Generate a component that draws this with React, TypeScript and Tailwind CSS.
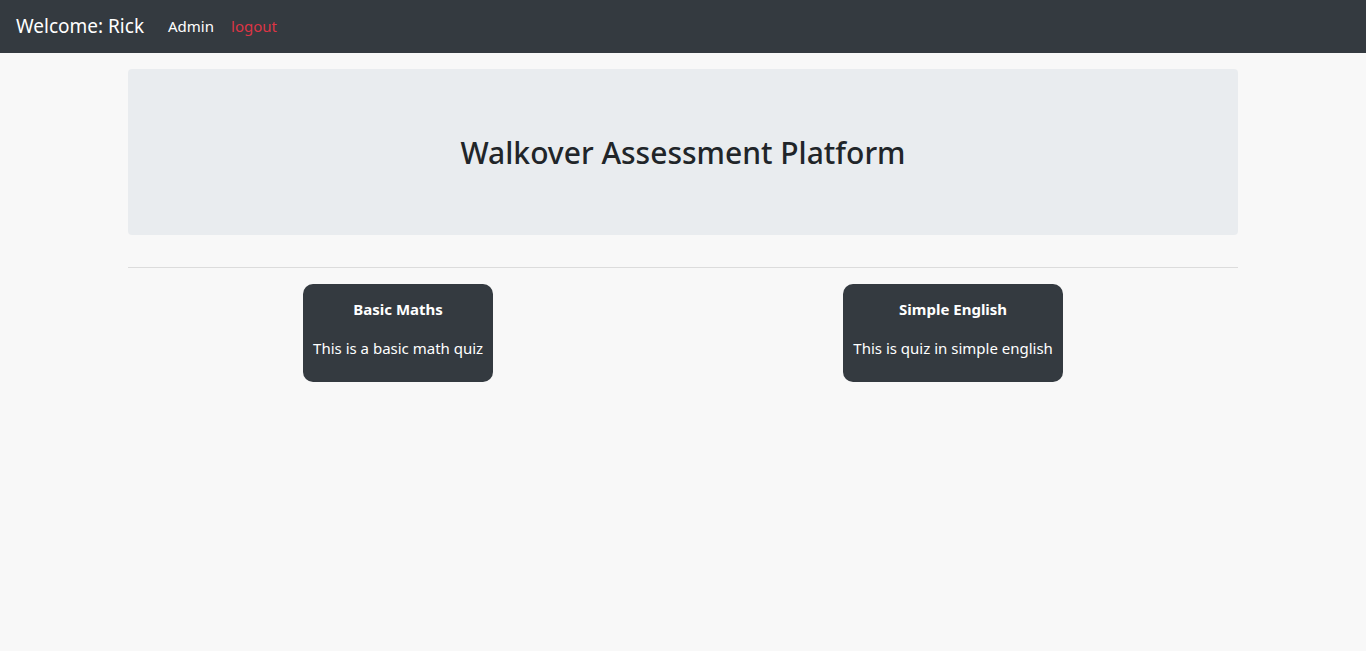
export default function App() {
  const font = { fontFamily: '"Noto Sans", "Open Sans", sans-serif' };
  return (
    <div className="min-h-[651px] bg-[#f8f8f8] font-['Noto_Sans',sans-serif]" style={font}>
      <nav className="flex h-[53px] items-center bg-[#343a40] px-4">
        <span className="text-[19px] text-white">Welcome: Rick</span>
        <a className="ml-[24px] text-[15px] text-white">Admin</a>
        <a className="ml-[17px] text-[15px] text-[#dc3545]">logout</a>
      </nav>
      <div className="mx-auto w-[1110px]">
        <div className="mt-4 flex h-[166px] items-center justify-center rounded bg-[#e9ecef]">
          <h1 className="text-[30px] font-medium text-[#212529]">Walkover Assessment Platform</h1>
        </div>
        <hr className="mt-8 border-t border-[#dcdcdc]" />
        <div className="mt-4 flex justify-around">
          <div className="h-[98px] rounded-[10px] bg-[#343a40] px-[10px] pt-[13px] text-center text-white">
            <div className="text-[15px] font-bold leading-6">Basic Maths</div>
            <div className="mt-[15px] text-[15px] leading-6">This is a basic math quiz</div>
          </div>
          <div className="h-[98px] rounded-[10px] bg-[#343a40] px-[10px] pt-[13px] text-center text-white">
            <div className="text-[15px] font-bold leading-6">Simple English</div>
            <div className="mt-[15px] text-[15px] leading-6">This is quiz in simple english</div>
          </div>
        </div>
      </div>
    </div>
  );
}
